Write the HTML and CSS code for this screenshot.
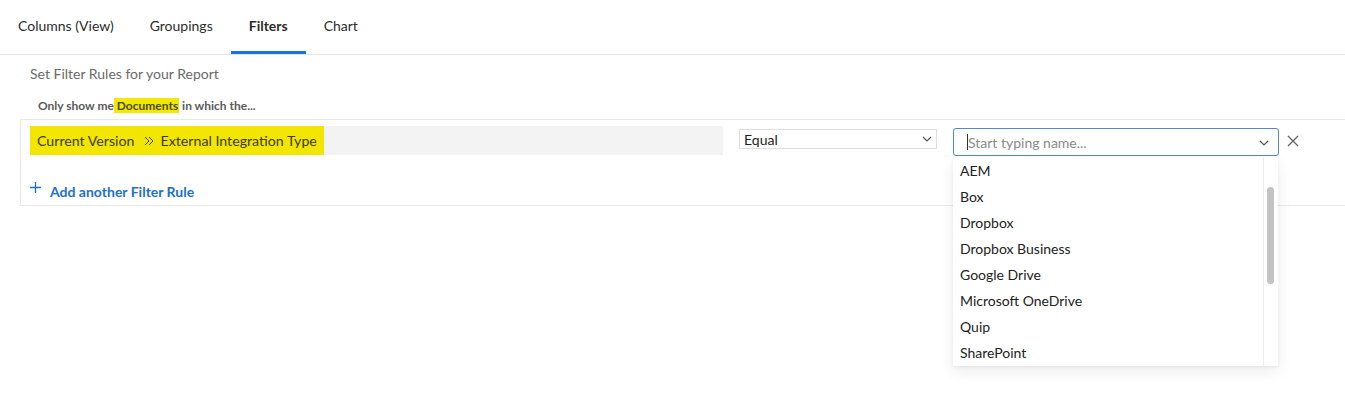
FILE: index.html
```html
<!DOCTYPE html>
<html>
<head>
<meta charset="utf-8">
<link rel="stylesheet" href="styles.css">
</head>
<body>
<nav class="tabs">
  <div class="tab">Columns (View)</div>
  <div class="tab">Groupings</div>
  <div class="tab active">Filters</div>
  <div class="tab">Chart</div>
</nav>
<main class="content">
  <h2 class="title">Set Filter Rules for your Report</h2>
  <p class="intro">Only show me<span class="hl"> Documents</span> in which the...</p>
  <section class="panel">
    <div class="rule">
      <div class="field"><span class="field-hl">Current Version<svg class="sep" width="10" height="10" viewBox="0 0 10 10"><path d="M1 1l4 4-4 4M5 1l4 4-4 4" fill="none" stroke="#3a3a10" stroke-width="1"/></svg>External Integration Type</span></div>
      <div class="select">
        <span>Equal</span>
        <svg class="chev" width="10" height="6" viewBox="0 0 10 6"><path d="M1 1l4 4 4-4" fill="none" stroke="#555" stroke-width="1.2"/></svg>
      </div>
      <div class="combo">
        <div class="input">
          <span class="caret"></span><span class="ph">Start typing name...</span>
          <svg class="chev" width="10" height="6" viewBox="0 0 10 6"><path d="M1 1l4 4 4-4" fill="none" stroke="#555" stroke-width="1.2"/></svg>
        </div>
        <div class="menu">
          <ul class="items">
            <li>AEM</li>
            <li>Box</li>
            <li>Dropbox</li>
            <li>Dropbox Business</li>
            <li>Google Drive</li>
            <li>Microsoft OneDrive</li>
            <li>Quip</li>
            <li>SharePoint</li>
          </ul>
          <div class="scroll"><div class="thumb"></div></div>
        </div>
      </div>
      <svg class="close" width="12" height="12" viewBox="0 0 12 12"><path d="M1 1l10 10M11 1L1 11" stroke="#666" stroke-width="1.4"/></svg>
    </div>
    <div class="add">
      <svg class="plus" width="11" height="11" viewBox="0 0 11 11"><path d="M5.5 0v11M0 5.5h11" stroke="#1b6fd1" stroke-width="1.3"/></svg>
      <span>Add another Filter Rule</span>
    </div>
  </section>
</main>
</body>
</html>
```
FILE: styles.css
```css
* { box-sizing: border-box; }
html, body { min-height: 100%; }
body {
  margin: 0;
  min-height: 401px;
  font-family: Lato, "Open Sans", sans-serif;
  color: #2c2c2c;
  background: #fff;
}
.tabs {
  display: flex;
  border-bottom: 1px solid #e4e4e4;
  height: 55px;
}
.tab {
  padding: 0 18px;
  height: 54px;
  line-height: 52px;
  font-size: 14px;
  color: #2c2c2c;
  border-bottom: 3px solid transparent;
}
.tab.active {
  font-weight: 700;
  border-bottom-color: #1473e6;
}
.content {
  padding: 0 0 0 20px;
}
.title {
  margin: 10px 0 0 10px;
  font-size: 14px;
  font-weight: 400;
  color: #6a6a6a;
  line-height: 18px;
}
.intro {
  margin: 15px 0 0 18px;
  font-size: 12px;
  font-weight: 700;
  color: #5a5a5a;
  line-height: 16px;
}
.intro .hl {
  background: #f3e800;
  color: #4a4a00;
  padding: 0 1px 0 0;
}
.panel {
  margin-top: 5px;
  border: 1px solid #e8e8e8;
  border-right: none;
  height: 87px;
  position: relative;
}
.rule {
  display: flex;
  align-items: flex-start;
  padding: 6px 0 0 9px;
  height: 35px;
}
.field {
  width: 693px;
  height: 29px;
  background: #f3f3f3;
  display: flex;
}
.field-hl {
  background: #f2e600;
  height: 29px;
  display: flex;
  align-items: center;
  padding: 0 7px 0 7px;
  font-size: 14.2px;
  color: #3a3a10;
}
.sep { margin: 0 7px 0 9px; }
.select {
  margin: 3px 0 0 16px;
  width: 198px;
  height: 20px;
  border: 1px solid #dedede;
  display: flex;
  align-items: center;
  justify-content: space-between;
  padding: 0 4px 0 4px;
  font-size: 14px;
  color: #222;
}
.combo {
  margin: 2px 0 0 16px;
  position: relative;
  width: 326px;
}
.input {
  height: 28px;
  border: 1px solid #4f89d3;
  border-radius: 3px;
  display: flex;
  align-items: center;
  padding: 0 9px 0 13px;
  font-size: 14px;
}
.caret {
  width: 1px;
  height: 16px;
  background: #333;
}
.ph { color: #8a8a8a; flex: 1; }
.input .chev { margin-top: 2px; }
.menu {
  position: absolute;
  top: 29px;
  left: 0;
  width: 325px;
  height: 209px;
  background: #fff;
  box-shadow: 0 6px 14px rgba(0,0,0,0.08), 0 1px 3px rgba(0,0,0,0.05);
  display: flex;
  z-index: 2;
}
.items {
  list-style: none;
  margin: 0;
  padding: 1px 0 0 0;
  flex: 1;
  border-right: 1px solid #ededed;
}
.items li {
  height: 26px;
  line-height: 26px;
  padding-left: 7px;
  font-size: 14px;
  color: #222;
}
.scroll {
  width: 14px;
  padding: 30px 0 0 3px;
}
.thumb {
  width: 7px;
  height: 97px;
  background: #c3c3c3;
  border-radius: 4px;
}
.close { margin: 9px 0 0 8px; }
.add {
  display: flex;
  align-items: center;
  padding: 28px 0 0 9px;
  color: #1b6fd1;
  font-weight: 700;
  font-size: 14px;
}
.plus { margin-top: -9px; margin-right: 9px; }
```
